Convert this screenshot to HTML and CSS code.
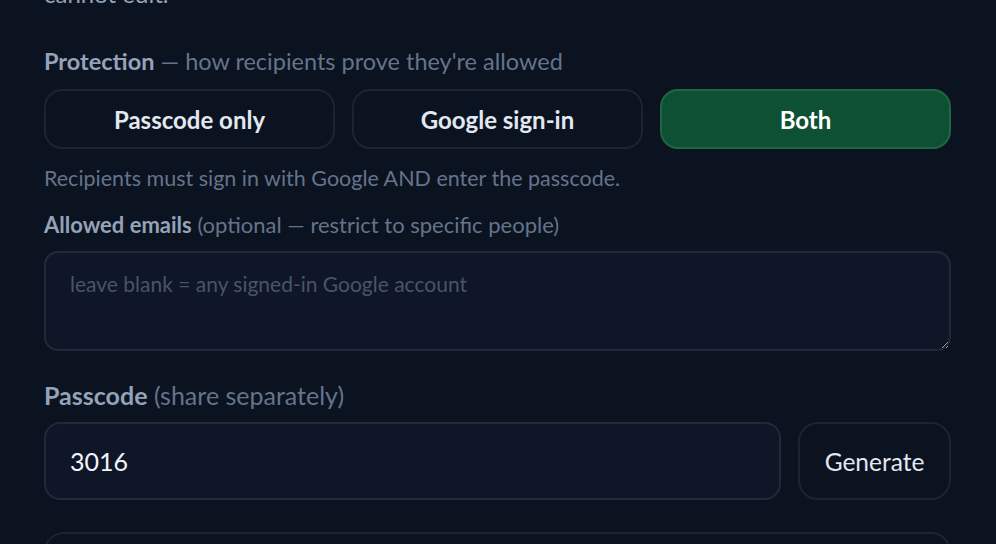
FILE: index.html
```html
<!DOCTYPE html>
<html lang="en">
<head>
<meta charset="utf-8">
<title>Share settings</title>
<link rel="stylesheet" href="styles.css">
</head>
<body>
<div class="form">
  <p class="prev">cannot edit.</p>

  <div class="label label-first"><b>Protection</b> — how recipients prove they're allowed</div>
  <div class="seg">
    <button class="seg-btn">Passcode only</button>
    <button class="seg-btn">Google sign-in</button>
    <button class="seg-btn active">Both</button>
  </div>
  <p class="hint">Recipients must sign in with Google AND enter the passcode.</p>

  <div class="label label-small"><b>Allowed emails</b> (optional — restrict to specific people)</div>
  <textarea class="area" placeholder="leave blank = any signed-in Google account"></textarea>

  <div class="label label-pass"><b>Passcode</b> (share separately)</div>
  <div class="pass-row">
    <input class="pass-input" type="text" value="3016">
    <button class="gen-btn">Generate</button>
  </div>

  <div class="next"></div>
</div>
</body>
</html>
```

FILE: styles.css
```css
* { box-sizing: border-box; }
html, body { margin: 0; padding: 0; height: 100%; }
body {
  background: #0b1220;
  font-family: Lato, "Noto Sans", sans-serif;
  color: #94a3b8;
  overflow: hidden;
}
.form {
  padding: 0 45px 0 44px;
  display: flex;
  flex-direction: column;
}
.prev {
  margin: -19px 0 0;
  font-size: 24px;
  line-height: 26px;
  color: #94a3b8;
}
.label {
  font-size: 23.5px;
  line-height: 28px;
  color: #64748b;
}
.label b { color: #94a3b8; font-weight: 700; }
.label-first { margin-top: 40px; }
.seg {
  margin-top: 14px;
  display: grid;
  grid-template-columns: repeat(3, 1fr);
  gap: 17px;
}
.seg-btn {
  height: 60px;
  border-radius: 18px;
  border: 2px solid #1c2433;
  background: #0b1220;
  color: #e2e8f0;
  font-family: inherit;
  font-size: 24px;
  font-weight: 700;
}
.seg-btn.active {
  background: #0e5033;
  border-color: #1e6644;
  color: #ffffff;
}
.hint {
  margin: 15px 0 0;
  font-size: 21.5px;
  line-height: 28px;
  color: #64748b;
}
.label-small { margin-top: 19px; font-size: 22px; }
.area {
  margin-top: 12px;
  height: 100px;
  width: 100%;
  border-radius: 14px;
  border: 2px solid #222a3a;
  background: #0f1628;
  color: #e2e8f0;
  font-family: inherit;
  font-size: 21px;
  padding: 18px 24px;
  resize: vertical;
  outline: none;
}
.area::placeholder { color: #475569; }
.label-pass { margin-top: 30px; font-size: 25px; }
.pass-row {
  margin-top: 13px;
  display: flex;
  gap: 17px;
}
.pass-input {
  flex: 1;
  min-width: 0;
  height: 78px;
  border-radius: 16px;
  border: 2px solid #222a3a;
  background: #0f1628;
  color: #f1f5f9;
  font-family: inherit;
  font-size: 25px;
  padding: 0 24px;
  outline: none;
}
.gen-btn {
  width: 153px;
  height: 78px;
  border-radius: 20px;
  border: 2px solid #1c2433;
  background: #0b1220;
  color: #e2e8f0;
  font-family: inherit;
  font-size: 24.5px;
}
.next {
  margin-top: 32px;
  height: 60px;
  border: 2px solid #1c2433;
  border-radius: 20px;
}
```
